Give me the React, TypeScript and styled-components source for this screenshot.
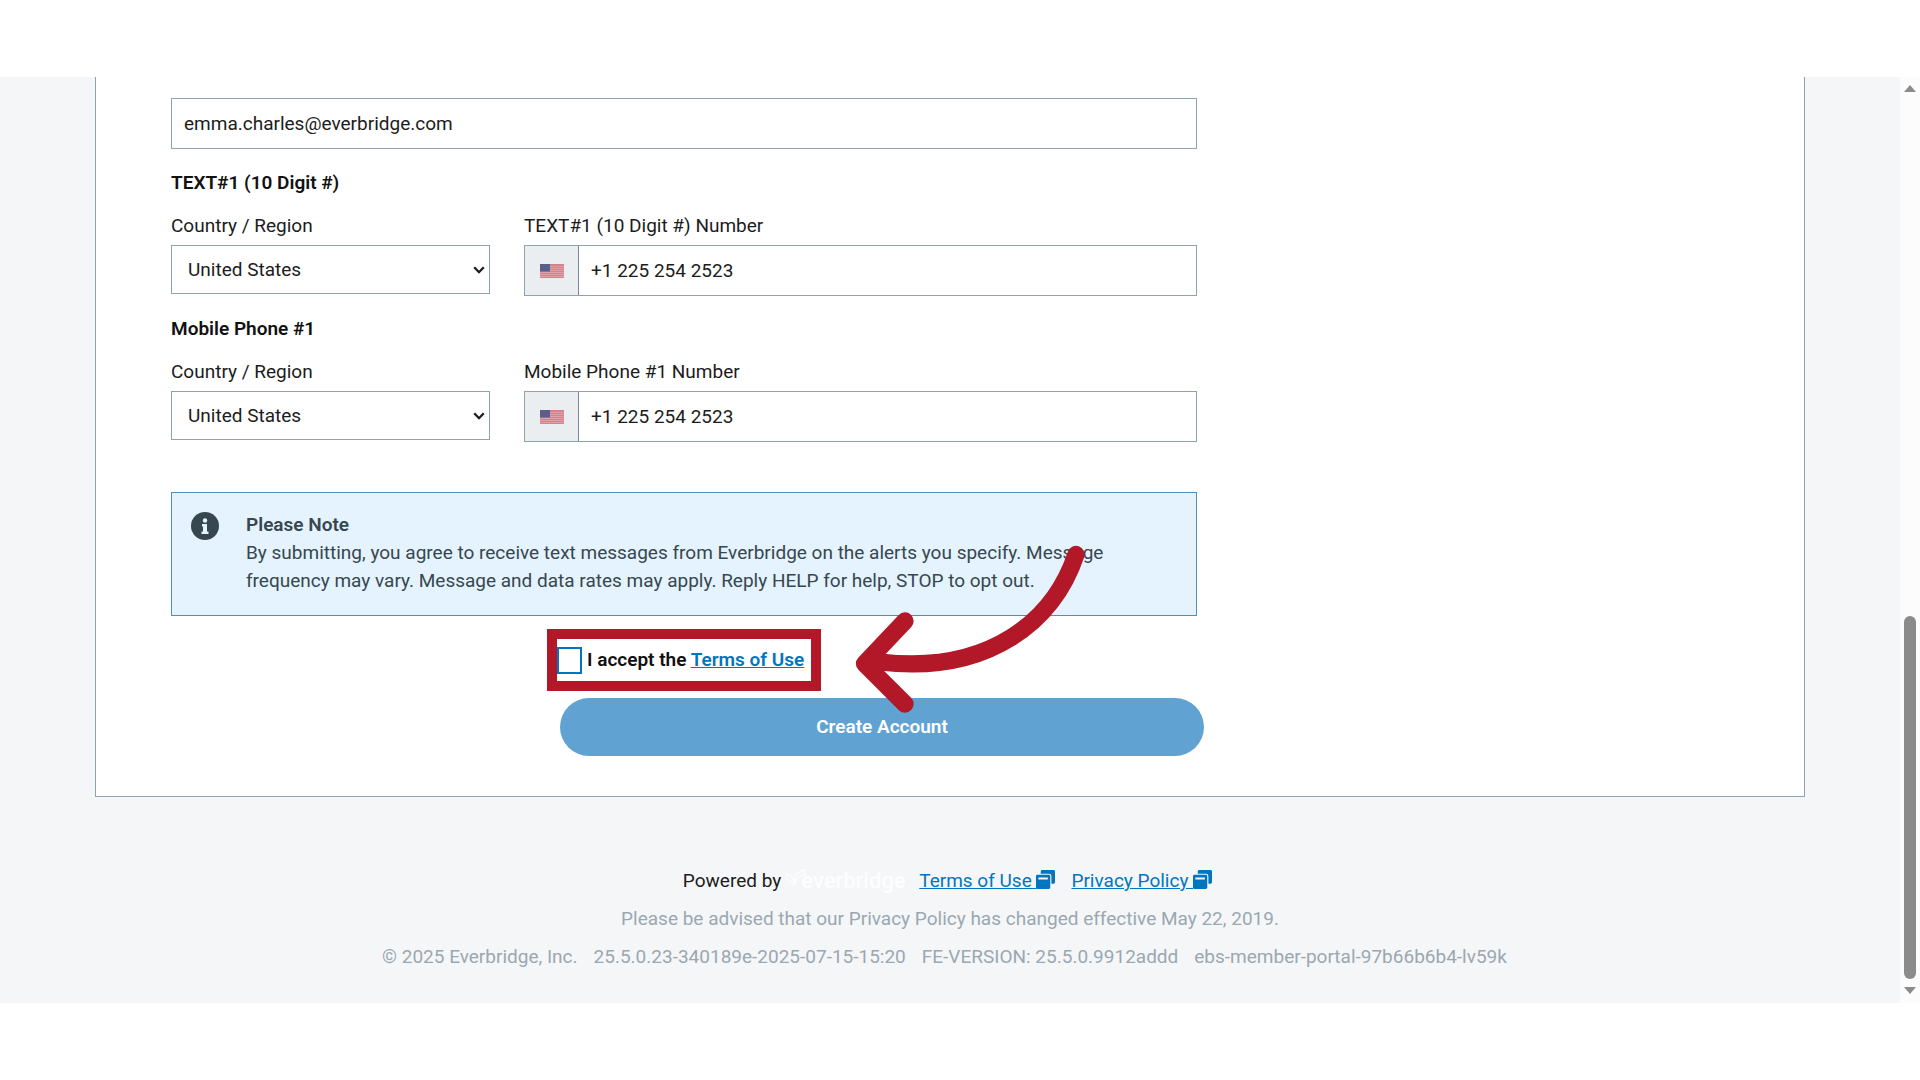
import React from "react";
import styled, { createGlobalStyle } from "styled-components";

const colors = {
  page: "#f5f6f8",
  border: "#8fa3ad",
  text: "#1c1c1c",
  muted: "#9aa8b1",
  link: "#0076be",
  note: "#37474f",
  red: "#b21827",
};

const GlobalStyle = createGlobalStyle`
  *, *::before, *::after { box-sizing: border-box; }
  body {
    margin: 0;
    background: #fff;
    color: ${colors.text};
    font-family: Roboto, "Liberation Sans", sans-serif;
    font-size: 19px;
    line-height: 28px;
  }
  input, select, button { font: inherit; color: inherit; }
`;

const Frame = styled.div`
  display: flex;
  margin: 77px 0;
  background: ${colors.page};
`;

const Content = styled.div`
  flex: 1;
  min-width: 0;
  display: flex;
  flex-direction: column;
`;

const Panel = styled.main`
  margin: 0 95px;
  padding: 21px 75px 40px;
  background: #fff;
  border: 1px solid ${colors.border};
  border-top: 0;
`;

const Form = styled.form`
  max-width: 1026px;
  display: flex;
  flex-direction: column;
`;

const TextInput = styled.input`
  width: 100%;
  height: 51px;
  margin-bottom: 20px;
  padding: 0 12px;
  background: #fff;
  border: 1px solid ${colors.border};
  border-radius: 0;
`;

const PhoneGroup = styled.fieldset`
  margin: 0 0 19px;
  padding: 0;
  border: 0;
`;

const GroupTitle = styled.legend`
  padding: 0 0 15px;
  font-weight: 600;
  color: #111;
`;

const PhoneRow = styled.div`
  display: grid;
  grid-template-columns: 319px 1fr;
  column-gap: 34px;
  align-items: start;
`;

const Field = styled.div`
  display: flex;
  flex-direction: column;
  gap: 5px;
`;

const SelectBox = styled.div`
  display: grid;
  align-items: center;
  > * { grid-area: 1 / 1; }
  > svg { justify-self: end; margin-right: 5px; pointer-events: none; }
`;

const Select = styled.select`
  appearance: none;
  width: 100%;
  height: 49px;
  padding: 0 16px;
  background: #fff;
  border: 1px solid ${colors.border};
  border-radius: 0;
`;

const PhoneBox = styled.div`
  display: flex;
  height: 51px;
  border: 1px solid ${colors.border};
`;

const FlagCell = styled.span`
  flex: none;
  width: 54px;
  display: flex;
  align-items: center;
  justify-content: center;
  background: #ebeef1;
  border-right: 1px solid #748c9a;
`;

const PhoneInput = styled.input`
  flex: 1;
  min-width: 0;
  padding: 0 12px;
  border: 0;
  background: #fff;
`;

const Note = styled.section`
  display: flex;
  gap: 27px;
  margin-top: 31px;
  padding: 18px 75px 20px 19px;
  background: #e4f3fd;
  border: 1px solid #4d8fc0;
  color: ${colors.note};
  > svg { flex: none; }
`;

const NoteTitle = styled.h2`
  margin: 0;
  font-size: 19px;
  line-height: 28px;
  font-weight: 600;
`;

const NoteText = styled.p`
  margin: 0;
`;

const AcceptArea = styled.div`
  position: relative;
  align-self: center;
  margin-top: 13px;
  width: 274px;
`;

const Highlight = styled.div`
  display: flex;
  align-items: center;
  gap: 5px;
  height: 62px;
  border: 10px solid ${colors.red};
  font-weight: 600;
  color: #111;
`;

const Checkbox = styled.input`
  appearance: none;
  flex: none;
  width: 25px;
  height: 27px;
  margin: 0;
  background: #fff;
  border: 2px solid ${colors.link};
`;

const Link = styled.a`
  color: ${colors.link};
  text-decoration: underline;
  > svg { vertical-align: -2px; }
`;

const Arrow = styled.svg`
  position: absolute;
  left: 300px;
  top: -90px;
  pointer-events: none;
`;

const SubmitButton = styled.button`
  align-self: flex-end;
  width: 644px;
  height: 58px;
  margin: 7px -7px 0 0;
  border: 0;
  border-radius: 29px;
  background: #60a3d3;
  color: #fff;
  font-weight: 600;
`;

const Footer = styled.footer`
  display: flex;
  flex-direction: column;
  align-items: center;
  gap: 10px;
  padding: 70px 0 32px;
  color: ${colors.muted};
`;

const FooterRow = styled.div<{ $gap?: number; $end?: number }>`
  display: flex;
  align-items: center;
  height: 28px;
  gap: ${(p) => p.$gap ?? 0}px;
  padding-right: ${(p) => p.$end ?? 0}px;
  white-space: nowrap;
`;

const Powered = styled.span`
  display: flex;
  align-items: center;
  gap: 4px;
  color: ${colors.text};
`;

const Brand = styled.span`
  display: flex;
  align-items: center;
  width: 118px;
  color: #fdfefe;
  font-size: 22px;
  font-weight: 500;
  > svg { flex: none; margin: -6px -6px 0 0; }
`;

const Track = styled.div`
  flex: none;
  width: 20px;
  display: flex;
  flex-direction: column;
  align-items: center;
  justify-content: space-between;
  padding: 8px 0 9px;
  background: #fcfcfc;
`;

const ThumbLane = styled.div`
  flex: 1;
  display: flex;
  align-items: flex-end;
  padding: 8px 0;
`;

const Thumb = styled.div`
  width: 12px;
  height: 363px;
  border-radius: 6px;
  background: #8b8b8b;
`;

const Chevron = () => (
  <svg width="12" height="10" viewBox="0 0 12 10" aria-hidden="true">
    <path d="M1.200 2.200 6 7.200l4.800-5" fill="none" stroke="#1c1c1c" strokeWidth="2.300" />
  </svg>
);

const Flag = () => (
  <svg width="24" height="14" viewBox="0 0 24 14" role="img" aria-label="United States">
    <rect width="24" height="14" fill="#d9808d" />
    {[2, 4, 6, 8, 10, 12].map((y) => (
      <rect key={y} y={y} width="24" height="1" fill="#e0a0aa" />
    ))}
    <rect width="10" height="7.500" fill="#5c5d8c" />
  </svg>
);

const InfoIcon = () => (
  <svg width="28" height="30" viewBox="0 -1 28 30" aria-hidden="true">
    <circle cx="14" cy="14" r="14" fill="#37474f" />
    <circle cx="14" cy="8.500" r="2.200" fill="#e4f3fd" />
    <path d="M11 12h5v7.500h1.500V22h-7v-2.500H12V14.500h-1z" fill="#e4f3fd" />
  </svg>
);

const WindowsIcon = () => (
  <svg width="19" height="19" viewBox="0 0 20 20" aria-hidden="true">
    <path d="M6.500 0h12A1.500 1.500 0 0 1 20 1.500V13a1.500 1.500 0 0 1-1.500 1.500h-2.300V6.500A2.500 2.500 0 0 0 13.700 4H5V1.500A1.500 1.500 0 0 1 6.500 0z" fill="#0076be" />
    <path fillRule="evenodd" d="M1.500 5h12A1.500 1.500 0 0 1 15 6.500v12a1.500 1.500 0 0 1-1.500 1.500h-12A1.500 1.500 0 0 1 0 18.500v-12A1.500 1.500 0 0 1 1.500 5zM2.500 7.800v2.200h10V7.800z" fill="#0076be" />
  </svg>
);

const Leaf = () => (
  <svg width="22" height="18" viewBox="0 0 22 18" aria-hidden="true">
    <path
      d="M1 5C5 5 8.500 8 9.500 15.500 5 13.500 1.500 10 1 5zM9.500 15.500C8.500 7 13 1.500 20.500 1c.5 3-1 5-4.500 6s-5.500 3-6.500 8.500z"
      fill="none"
      stroke="#fdfefe"
      strokeWidth="1.300"
      strokeLinejoin="round"
    />
  </svg>
);

const CurvedArrow = () => (
  <Arrow width="240" height="180" viewBox="0 0 240 180" fill="none" stroke={colors.red} strokeWidth="17.300" strokeLinecap="round" strokeLinejoin="round" aria-hidden="true">
    <path d="M229 15.500C207 81 143 136 33 123" />
    <path d="M58 82 17.500 124.700 58 165" />
  </Arrow>
);

const Phone = ({ id, title }: { id: string; title: string }) => (
  <PhoneGroup>
    <GroupTitle>{title}</GroupTitle>
    <PhoneRow>
      <Field>
        <label htmlFor={`${id}-country`}>Country / Region</label>
        <SelectBox>
          <Select id={`${id}-country`} defaultValue="US">
            <option value="US">United States</option>
          </Select>
          <Chevron />
        </SelectBox>
      </Field>
      <Field>
        <label htmlFor={`${id}-number`}>{title} Number</label>
        <PhoneBox>
          <FlagCell>
            <Flag />
          </FlagCell>
          <PhoneInput id={`${id}-number`} type="tel" defaultValue="+1 225 254 2523" />
        </PhoneBox>
      </Field>
    </PhoneRow>
  </PhoneGroup>
);

export default function App() {
  return (
    <>
      <GlobalStyle />
      <Frame>
        <Content>
          <Panel>
            <Form onSubmit={(e) => e.preventDefault()}>
              <TextInput type="email" aria-label="Email" defaultValue="emma.charles@everbridge.com" />
              <Phone id="text1" title="TEXT#1 (10 Digit #)" />
              <Phone id="mobile1" title="Mobile Phone #1" />
              <Note>
                <InfoIcon />
                <div>
                  <NoteTitle>Please Note</NoteTitle>
                  <NoteText>
                    By submitting, you agree to receive text messages from Everbridge on the alerts you specify. Message
                    frequency may vary. Message and data rates may apply. Reply HELP for help, STOP to opt out.
                  </NoteText>
                </div>
              </Note>
              <AcceptArea>
                <Highlight>
                  <Checkbox type="checkbox" id="accept" />
                  <label htmlFor="accept">
                    I accept the <Link href="#terms">Terms of Use</Link>
                  </label>
                </Highlight>
                <CurvedArrow />
              </AcceptArea>
              <SubmitButton type="submit">Create Account</SubmitButton>
            </Form>
          </Panel>
          <Footer>
            <FooterRow $gap={16} $end={5}>
              <Powered>
                Powered by
                <Brand>
                  <Leaf />
                  everbridge
                </Brand>
              </Powered>
              <Link href="#terms">
                Terms of Use <WindowsIcon />
              </Link>
              <Link href="#privacy">
                Privacy Policy <WindowsIcon />
              </Link>
            </FooterRow>
            <FooterRow>
              Please be advised that our Privacy Policy has changed effective May 22, 2019.
            </FooterRow>
            <FooterRow $gap={16} $end={11}>
              <span>© 2025 Everbridge, Inc.</span>
              <span>25.5.0.23-340189e-2025-07-15-15:20</span>
              <span>FE-VERSION: 25.5.0.9912addd</span>
              <span>ebs-member-portal-97b66b6b4-lv59k</span>
            </FooterRow>
          </Footer>
        </Content>
        <Track aria-hidden="true">
          <svg width="12" height="7" viewBox="0 0 12 7">
            <path d="M0 7 6 0l6 7z" fill="#8b8b8b" />
          </svg>
          <ThumbLane>
            <Thumb />
          </ThumbLane>
          <svg width="12" height="7" viewBox="0 0 12 7">
            <path d="M0 0h12L6 7z" fill="#8b8b8b" />
          </svg>
        </Track>
      </Frame>
    </>
  );
}
